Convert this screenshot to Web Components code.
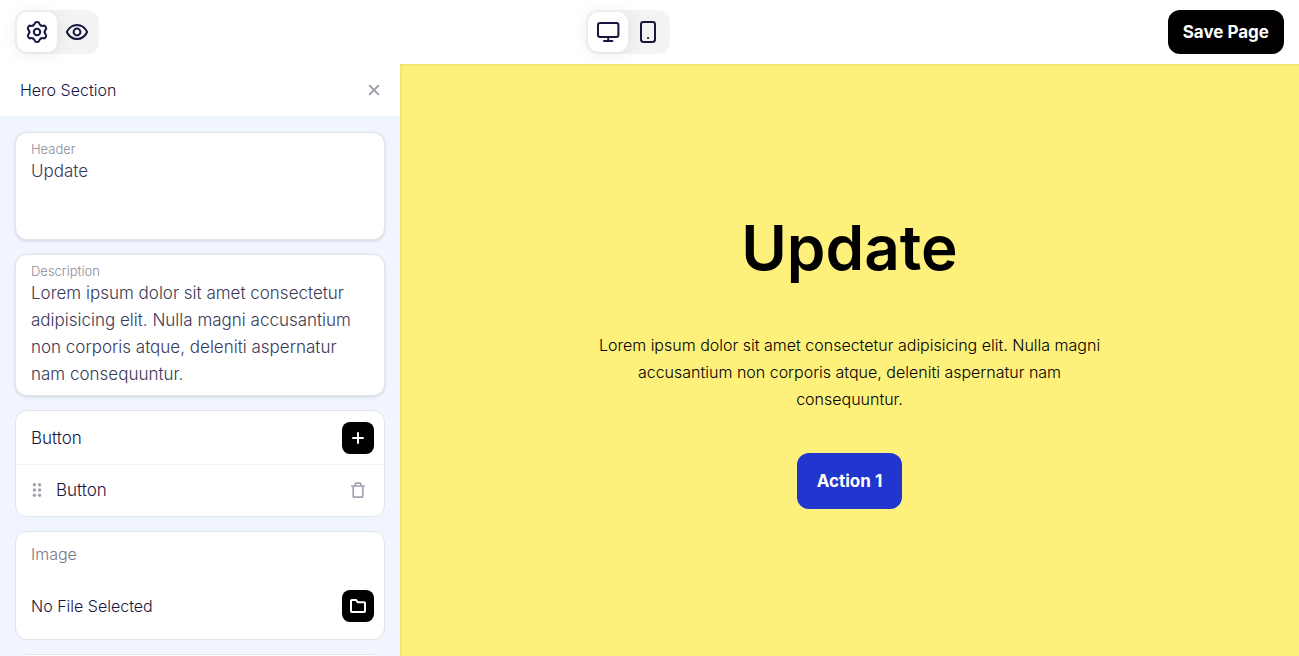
<!DOCTYPE html>
<html lang="en">
<head>
<meta charset="utf-8">
<title>Page Builder</title>
<style>
  body {
    margin: 0;
    font-family: "Inter", "Liberation Sans", sans-serif;
    font-size: 16px;
    font-weight: 300;
    line-height: 24px;
    color: #16163f;
    background: #fff;
  }
</style>
</head>
<body>
<page-builder></page-builder>
<script>
const gearTooth = 'M8.2 5.4C9.6 4.6 9.6 4.1 9.8 3.2C10.2 1.5 13.8 1.5 14.2 3.2C14.4 4.1 14.4 4.6 15.8 5.4';
const icons = {
  gear: '<circle cx="12" cy="12" r="3.2"/>' +
    [0, 60, 120, 180, 240, 300].map(a => `<path d="${gearTooth}" transform="rotate(${a} 12 12)"/>`).join(''),
  eye: '<circle cx="12" cy="12" r="3.4"/><path d="M1.8 12C6.5 2.6 17.5 2.6 22.2 12C17.5 21.4 6.5 21.4 1.8 12Z"/>',
  desktop: '<rect x="2" y="3" width="20.4" height="14" rx="2"/><path d="M12.2 17v4M8 21h8.4"/>',
  phone: '<rect x="5" y="2" width="14" height="20" rx="2.4"/><circle cx="12" cy="18" r=".6" fill="currentColor" stroke-width="1"/>',
  close: '<path d="M7.7 7.7l8.6 8.6M16.3 7.7l-8.6 8.6"/>',
  plus: '<path d="M12 7v10M7 12h10"/>',
  folder: '<path d="M5 17.2V6.8Q5 6 5.8 6H10l2 2.3h6.2q.8 0 .8.8v8.1q0 .8-.8.8H5.8q-.8 0-.8-.8z"/>',
  trash: '<path stroke-width="1.7" d="M5.8 8h12.4M7.2 8v10.2q0 1 1 1h7.6q1 0 1-1V8M9.2 8V6.1q0-.9.9-.9h3.8q.9 0 .9.9V8"/>',
  grip: '<g fill="currentColor" stroke="none"><circle cx="9.4" cy="6.8" r="1.7"/><circle cx="14.6" cy="6.8" r="1.7"/><circle cx="9.4" cy="12" r="1.7"/><circle cx="14.6" cy="12" r="1.7"/><circle cx="9.4" cy="17.2" r="1.7"/><circle cx="14.6" cy="17.2" r="1.7"/></g>'
};

function define(name, render) {
  customElements.define(name, class extends HTMLElement {
    connectedCallback() {
      if (this.shadowRoot) return;
      this.attachShadow({ mode: 'open' }).innerHTML = render(this);
    }
  });
}

define('ui-icon', el => `
  <style>
    :host { display: block; width: 24px; height: 24px; }
    svg { display: block; width: 100%; height: 100%; }
  </style>
  <svg viewBox="0 0 24 24" fill="none" stroke="currentColor" stroke-width="2" stroke-linecap="round" stroke-linejoin="round" aria-hidden="true">${icons[el.getAttribute('name')]}</svg>`);

define('icon-button', el => `
  <style>
    :host { display: block; flex: none; }
    button {
      display: grid; place-items: center; width: 32px; height: 32px; padding: 0;
      border: 0; border-radius: 8px; background: none; color: #a3a2b1; cursor: pointer;
    }
    :host([solid]) button { background: #000; color: #fff; }
    :host([large]) button { width: 40px; height: 40px; border-radius: 10px; color: #16163f; }
    :host([active]) button { background: #fff; box-shadow: 0 2px 16px rgba(90, 90, 40, .12); }
  </style>
  <button type="button" aria-label="${el.getAttribute('label')}"><ui-icon name="${el.getAttribute('icon')}"></ui-icon></button>`);

define('toggle-group', () => `
  <style>
    :host { display: flex; padding: 2px; border-radius: 12px; background: #f3f3f3; }
  </style>
  <slot></slot>`);

define('top-bar', () => `
  <style>
    :host { display: flex; justify-content: space-between; align-items: center; height: 64px; padding: 0 15px; background: #fff; }
    .actions { display: flex; justify-content: flex-end; min-width: 127px; }
    .save {
      height: 44px; padding: 0 15px; border: 0; border-radius: 12px; background: #000; color: #fff;
      font: inherit; font-size: 17px; font-weight: 700; cursor: pointer;
    }
  </style>
  <toggle-group>
    <icon-button large active icon="gear" label="Settings"></icon-button>
    <icon-button large icon="eye" label="Preview"></icon-button>
  </toggle-group>
  <toggle-group>
    <icon-button large active icon="desktop" label="Desktop"></icon-button>
    <icon-button large icon="phone" label="Mobile"></icon-button>
  </toggle-group>
  <div class="actions"><button class="save" type="button">Save Page</button></div>`);

define('panel-card', () => `
  <style>
    :host { display: block; flex: none; border: 1px solid #e5e5e8; border-radius: 12px; background: #fff; }
  </style>
  <slot></slot>`);

define('text-field', el => `
  <style>
    :host {
      display: block; flex: none; padding: 7px 15px; border: 1px solid #e5e5e8; border-radius: 12px;
      background: #fff; box-shadow: 0 1px 3px rgba(0, 0, 0, .14);
    }
    label { display: block; font-size: 13px; line-height: 18px; color: #8c8b9d; }
    textarea {
      display: block; box-sizing: border-box; width: 100%; min-height: 74px; padding: 0; border: 0;
      outline: 0; resize: none; overflow: hidden; background: none; font: inherit; font-size: 17px; line-height: 27px; color: #3b3a58;
    }
  </style>
  <label for="field">${el.getAttribute('label')}</label>
  <textarea id="field" rows="${el.getAttribute('rows')}">${el.getAttribute('value')}</textarea>`);

define('settings-panel', () => `
  <style>
    :host { display: flex; flex-direction: column; min-height: 0; overflow: hidden; background: #f1f5ff; }
    header { flex: none; display: flex; align-items: center; justify-content: space-between; height: 52px; padding: 0 10px 0 20px; background: #fff; }
    h2, h3 { margin: 0; font: inherit; }
    .fields { display: flex; flex-direction: column; gap: 14px; min-height: 0; padding: 16px 15px; overflow: hidden; }
    .row { display: flex; align-items: center; justify-content: space-between; padding: 0 10px 0 15px; }
    .head { height: 53px; border-bottom: 1px solid #eef4fc; font-size: 17px; }
    .item { height: 49px; padding-bottom: 2px; font-size: 17px; }
    .name { display: flex; align-items: center; gap: 7px; }
    .grip { margin-left: -6px; color: #a3a2b1; }
    .title { padding: 10px 15px 24px; color: #77768a; }
    .file { padding-bottom: 17px; }
  </style>
  <header><h2>Hero Section</h2><icon-button icon="close" label="Close"></icon-button></header>
  <div class="fields">
    <text-field label="Header" rows="2" value="Update"></text-field>
    <text-field label="Description" rows="4" value="Lorem ipsum dolor sit amet consectetur adipisicing elit. Nulla magni accusantium non corporis atque, deleniti aspernatur nam consequuntur."></text-field>
    <panel-card>
      <div class="row head"><h3>Button</h3><icon-button solid icon="plus" label="Add button"></icon-button></div>
      <div class="row item"><span class="name"><ui-icon class="grip" name="grip"></ui-icon>Button</span><icon-button icon="trash" label="Delete button"></icon-button></div>
    </panel-card>
    <panel-card>
      <h3 class="title">Image</h3>
      <div class="row file"><span>No File Selected</span><icon-button solid icon="folder" label="Choose file"></icon-button></div>
    </panel-card>
    <panel-card><div class="row head"></div></panel-card>
  </div>`);

define('hero-preview', () => `
  <style>
    :host {
      display: flex; flex-direction: column; align-items: center; justify-content: center; min-width: 0;
      background: #fef17b; color: #000; text-align: center; box-shadow: inset 3px 3px 3px -2px rgba(0, 0, 0, .08);
    }
    h1 { margin: 0 0 48px; font-size: 62px; line-height: 72px; font-weight: 600; }
    p { max-width: 520px; margin: 0 0 40px; line-height: 27px; }
    a {
      padding: 16px 20px; border-radius: 12px; background: #2135cf; color: #fff;
      font-size: 17px; font-weight: 700; text-decoration: none;
    }
  </style>
  <h1>Update</h1>
  <p>Lorem ipsum dolor sit amet consectetur adipisicing elit. Nulla magni accusantium non corporis atque, deleniti aspernatur nam consequuntur.</p>
  <a href="#">Action 1</a>`);

define('page-builder', () => `
  <style>
    :host { display: grid; grid-template: auto minmax(0, 1fr) / 400px minmax(0, 1fr); height: 100vh; overflow: hidden; }
    top-bar { grid-column: 1 / -1; }
  </style>
  <top-bar></top-bar>
  <settings-panel></settings-panel>
  <hero-preview></hero-preview>`);
</script>
</body>
</html>
